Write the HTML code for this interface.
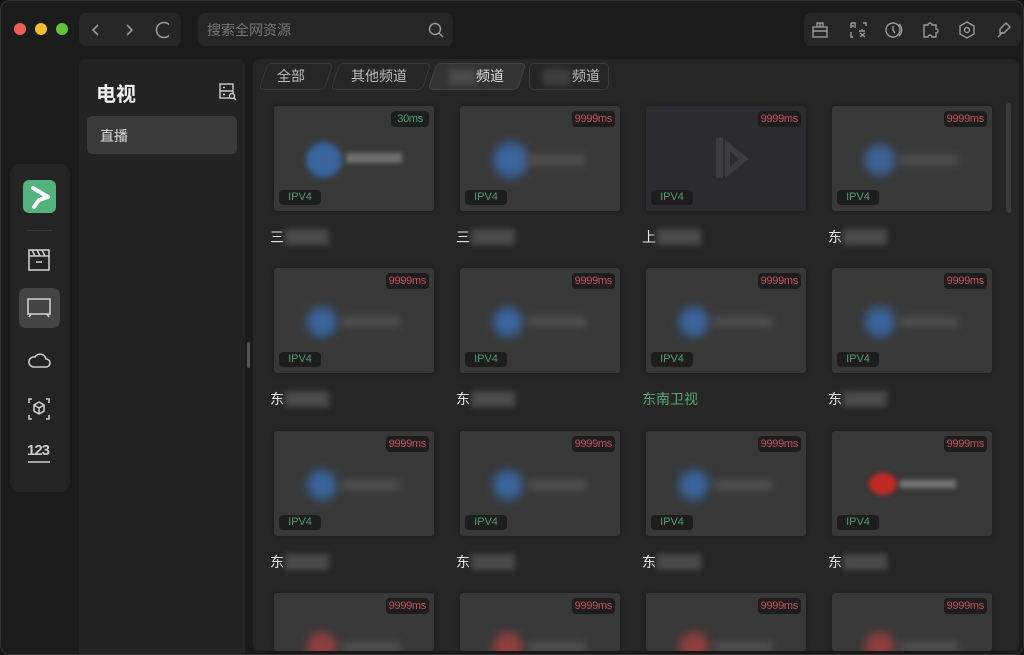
<!DOCTYPE html>
<html><head><meta charset="utf-8"><style>
*{box-sizing:border-box;margin:0;padding:0}
html,body{width:1024px;height:655px;overflow:hidden}
body{background:#161616;font-family:"Liberation Sans","Noto Sans CJK SC",sans-serif;position:relative;color:#ddd}
.win{position:absolute;left:0;top:0;width:1024px;height:655px;background:#1b1b1b;border-radius:10px;border:1px solid #333;overflow:hidden}
.abs{position:absolute}
.dot{position:absolute;top:22px;width:12px;height:12px;border-radius:50%}
.box{position:absolute;background:#262626;border-radius:7px}
.card{position:absolute;width:160px;height:105px;background:#383838;border-radius:3px;overflow:hidden;box-shadow:0 0 6px rgba(0,0,0,.35)}
.ms{position:absolute;right:5px;top:5px;height:16px;padding:0 3px;background:#1d1d1d;border-radius:4px;color:#c5525a;font-size:11px;line-height:16px;letter-spacing:-.3px}
.ms.g{color:#4f9c70;padding:0 6px}
.ip{position:absolute;left:5px;bottom:6px;width:42px;height:15px;background:#1d1d1d;border-radius:4px;color:#4f9c70;font-size:11px;line-height:15px;text-align:center}
.lg{position:absolute;left:33px;top:39px;width:30px;height:30px;border-radius:50%;background:#3a6cae;filter:blur(5px);opacity:.85}
.bar{position:absolute;left:68px;top:49px;width:58px;height:10px;background:#505050;filter:blur(4px)}
.lbl{position:absolute;font-size:14px;color:#e8e8e8;height:20px;line-height:20px}
.lbl i{display:inline-block;width:44px;height:16px;background:#4a4a4a;filter:blur(3px);vertical-align:-3px;margin-left:1px}
.tab{position:absolute;top:62px;height:27px;border:1px solid #3a3a3a;background:#262626;border-radius:5px;transform:skewX(-18deg);}
.tabt{position:absolute;top:62px;height:27px;line-height:27px;font-size:14px;color:#bbb}
svg{position:absolute}
</style></head><body><div class="win">
<div class="dot" style="left:13px;background:#ed5f57"></div>
<div class="dot" style="left:34px;background:#f5bd2f"></div>
<div class="dot" style="left:55px;background:#5fc43b"></div>
<div class="box" style="left:78px;top:12px;width:102px;height:33px"></div>
<svg style="left:88px;top:20px" width="80" height="18" fill="none" stroke="#999" stroke-width="1.6"><path d="M9 4l-5 5 5 5"/><path d="M38 4l5 5-5 5"/><circle cx="75" cy="9" r="7.5"/></svg>
<div class="box" style="left:197px;top:12px;width:255px;height:33px"></div>
<div class="abs" style="left:206px;top:19px;font-size:14px;color:#777">搜索全网资源</div>
<svg style="left:427px;top:21px" width="16" height="16" fill="none" stroke="#999" stroke-width="1.5"><circle cx="7" cy="7" r="5.5"/><path d="M11 11l4 4"/></svg>
<div class="box" style="left:803px;top:12px;width:217px;height:33px"></div>
<svg style="left:810px;top:19px" width="205" height="20" fill="none" stroke="#9a9a9a" stroke-width="1.4">
<rect x="2" y="7" width="14" height="10"/><path d="M2 11h14M6 7V3h6v4M9 3v4"/>
<path d="M40 3h4v5M40 8v-5M43 6h-3M40 12v5h2M48 11h6M51 9v2M49 13l5 4M54 13l-5 4M52 3h3v3"/>
<circle cx="82" cy="10" r="7"/><path d="M82 6v4l2 3M88 4a8 8 0 0 1 0 12"/>
<path d="M113 5h4a2 2 0 0 1 4 0h4v4a2 2 0 0 1 0 4v4h-4a2 2 0 0 0-4 0h-4z"/>
<path d="M156 2l7 4v8l-7 4-7-4V6z"/><circle cx="156" cy="10" r="2.5"/>
<path d="M187 17l5-5M189 9l6-6 4 4-6 6-4 0z"/>
</svg>
<div class="box" style="left:9px;top:163px;width:60px;height:328px;background:#242424;border-radius:9px"></div>
<div class="abs" style="left:22px;top:179px;width:33px;height:33px;background:#53b37d;border-radius:6px"></div>
<svg style="left:22px;top:179px" width="33" height="33"><path d="M10 8l15 9-9 3-5 7" fill="none" stroke="#fff" stroke-width="4" stroke-linejoin="round" stroke-linecap="round"/></svg>
<div class="abs" style="left:26px;top:229px;width:25px;height:1px;background:#3a3a3a"></div>
<div class="abs" style="left:18px;top:287px;width:41px;height:40px;background:#444;border-radius:7px"></div>
<svg style="left:24px;top:244px" width="30" height="230" fill="none" stroke="#ccc" stroke-width="1.6">
<rect x="4" y="5" width="20" height="20"/><path d="M4 11h20M7 5l3 6M12 5l3 6M17 5l3 6M11 17h6"/>
<rect x="3" y="54" width="22" height="15"/><path d="M6 69l-2 3M22 69l2 3"/>
<path d="M8 122h13a4 4 0 0 0 0-8 6 6 0 0 0-11-2 5 5 0 0 0-2 10z"/>
<path d="M4 158v-4h3M21 154h3v4M4 170v4h3M21 174h3v-4M14 157l5 3v6l-5 3-5-3v-6zM9 160l5 3 5-3M14 163v6"/>
<path d="M3 217h22"/>
</svg>
<div class="abs" style="left:26px;top:441px;font-size:15px;color:#ccc;letter-spacing:-1px;font-weight:bold">123</div>
<div class="box" style="left:78px;top:58px;width:166px;height:600px;background:#232323"></div>
<div class="abs" style="left:95px;top:77px;font-size:20px;font-weight:bold;color:#eee">电视</div>
<svg style="left:218px;top:82px" width="18" height="18" fill="none" stroke="#ccc" stroke-width="1.4"><rect x="1" y="1" width="13" height="14"/><path d="M1 8h13M4 4.5h2M4 11.5h2"/><circle cx="13" cy="13" r="2.5" fill="#232323"/><path d="M15 15l2 2"/></svg>
<div class="abs" style="left:86px;top:115px;width:150px;height:38px;background:#3a3a3a;border-radius:5px"></div>
<div class="abs" style="left:99px;top:125px;font-size:14px;color:#ddd">直播</div>
<div class="abs" style="left:246px;top:341px;width:3px;height:26px;background:#555;border-radius:2px"></div>
<div class="box" style="left:252px;top:58px;width:766px;height:592px;background:#262626"></div>
<div class="tab" style="left:262px;width:66px"></div><div class="tabt" style="left:276px">全部</div>
<div class="tab" style="left:334px;width:92px"></div><div class="tabt" style="left:350px">其他频道</div>
<div class="tab" style="left:431px;width:90px;background:#333;border-color:#444"></div>
<div class="abs" style="left:448px;top:68px;width:27px;height:16px;background:#4a4a4a;filter:blur(3px)"></div><div class="tabt" style="left:475px;color:#ddd">频道</div>
<div class="tab" style="left:528px;width:80px;transform:none"></div>
<div class="abs" style="left:542px;top:68px;width:28px;height:16px;background:#3e3e3e;filter:blur(3px)"></div><div class="tabt" style="left:571px">频道</div>
<div class="abs" style="left:1005px;top:102px;width:5px;height:110px;background:#3a3a3a;border-radius:3px"></div>

<div class="card" style="left:273px;top:105px"><div class="lg" style="left:32px;top:36px;width:36px;height:36px;filter:blur(3px)"></div><div class="bar" style="left:72px;top:47px;width:56px;height:10px;background:#707070;filter:blur(2.5px)"></div><div class="ms g">30ms</div><div class="ip">IPV4</div></div>
<div class="card" style="left:459px;top:105px"><div class="lg" style="width:36px;height:36px;top:36px"></div><div class="bar"></div><div class="ms">9999ms</div><div class="ip">IPV4</div></div>
<div class="card" style="left:645px;top:105px;background:#2c2c30"><svg style="left:55px;top:28px" width="50" height="50"><rect x="15" y="4" width="7" height="40" fill="#3c3c40"/><path d="M24 6l24 19-24 19z" fill="#3c3c40"/><path d="M29 17l9 8-9 8z" fill="#2c2c30"/></svg><div class="ms">9999ms</div><div class="ip">IPV4</div></div>
<div class="card" style="left:831px;top:105px"><div class="lg"></div><div class="bar"></div><div class="ms">9999ms</div><div class="ip">IPV4</div></div>
<div class="lbl" style="left:269px;top:226px">三<i></i></div>
<div class="lbl" style="left:455px;top:226px">三<i></i></div>
<div class="lbl" style="left:641px;top:226px">上<i></i></div>
<div class="lbl" style="left:827px;top:226px">东<i></i></div>
<div class="card" style="left:273px;top:267px"><div class="lg"></div><div class="bar"></div><div class="ms">9999ms</div><div class="ip">IPV4</div></div>
<div class="card" style="left:459px;top:267px"><div class="lg"></div><div class="bar"></div><div class="ms">9999ms</div><div class="ip">IPV4</div></div>
<div class="card" style="left:645px;top:267px"><div class="lg"></div><div class="bar"></div><div class="ms">9999ms</div><div class="ip">IPV4</div></div>
<div class="card" style="left:831px;top:267px"><div class="lg"></div><div class="bar"></div><div class="ms">9999ms</div><div class="ip">IPV4</div></div>
<div class="lbl" style="left:269px;top:388px">东<i></i></div>
<div class="lbl" style="left:455px;top:388px">东<i></i></div>
<div class="lbl" style="left:641px;top:388px;color:#55a676">东南卫视</div>
<div class="lbl" style="left:827px;top:388px">东<i></i></div>
<div class="card" style="left:273px;top:430px"><div class="lg"></div><div class="bar"></div><div class="ms">9999ms</div><div class="ip">IPV4</div></div>
<div class="card" style="left:459px;top:430px"><div class="lg"></div><div class="bar"></div><div class="ms">9999ms</div><div class="ip">IPV4</div></div>
<div class="card" style="left:645px;top:430px"><div class="lg"></div><div class="bar"></div><div class="ms">9999ms</div><div class="ip">IPV4</div></div>
<div class="card" style="left:831px;top:430px"><div class="lg" style="background:#c02a22;width:28px;height:22px;top:42px;left:37px;filter:blur(2.5px);opacity:1"></div><div class="bar" style="left:68px;top:49px;width:56px;height:8px;background:#777;filter:blur(2.5px)"></div><div class="ms">9999ms</div><div class="ip">IPV4</div></div>
<div class="lbl" style="left:269px;top:551px">东<i></i></div>
<div class="lbl" style="left:455px;top:551px">东<i></i></div>
<div class="lbl" style="left:641px;top:551px">东<i></i></div>
<div class="lbl" style="left:827px;top:551px">东<i></i></div>
<div class="card" style="left:273px;top:592px;height:58px"><div class="lg" style="background:#a04040"></div><div class="bar"></div><div class="ms">9999ms</div></div>
<div class="card" style="left:459px;top:592px;height:58px"><div class="lg" style="background:#a04040"></div><div class="bar"></div><div class="ms">9999ms</div></div>
<div class="card" style="left:645px;top:592px;height:58px"><div class="lg" style="background:#a04040"></div><div class="bar"></div><div class="ms">9999ms</div></div>
<div class="card" style="left:831px;top:592px;height:58px"><div class="lg" style="background:#a04040"></div><div class="bar"></div><div class="ms">9999ms</div></div>
</div></body></html>
